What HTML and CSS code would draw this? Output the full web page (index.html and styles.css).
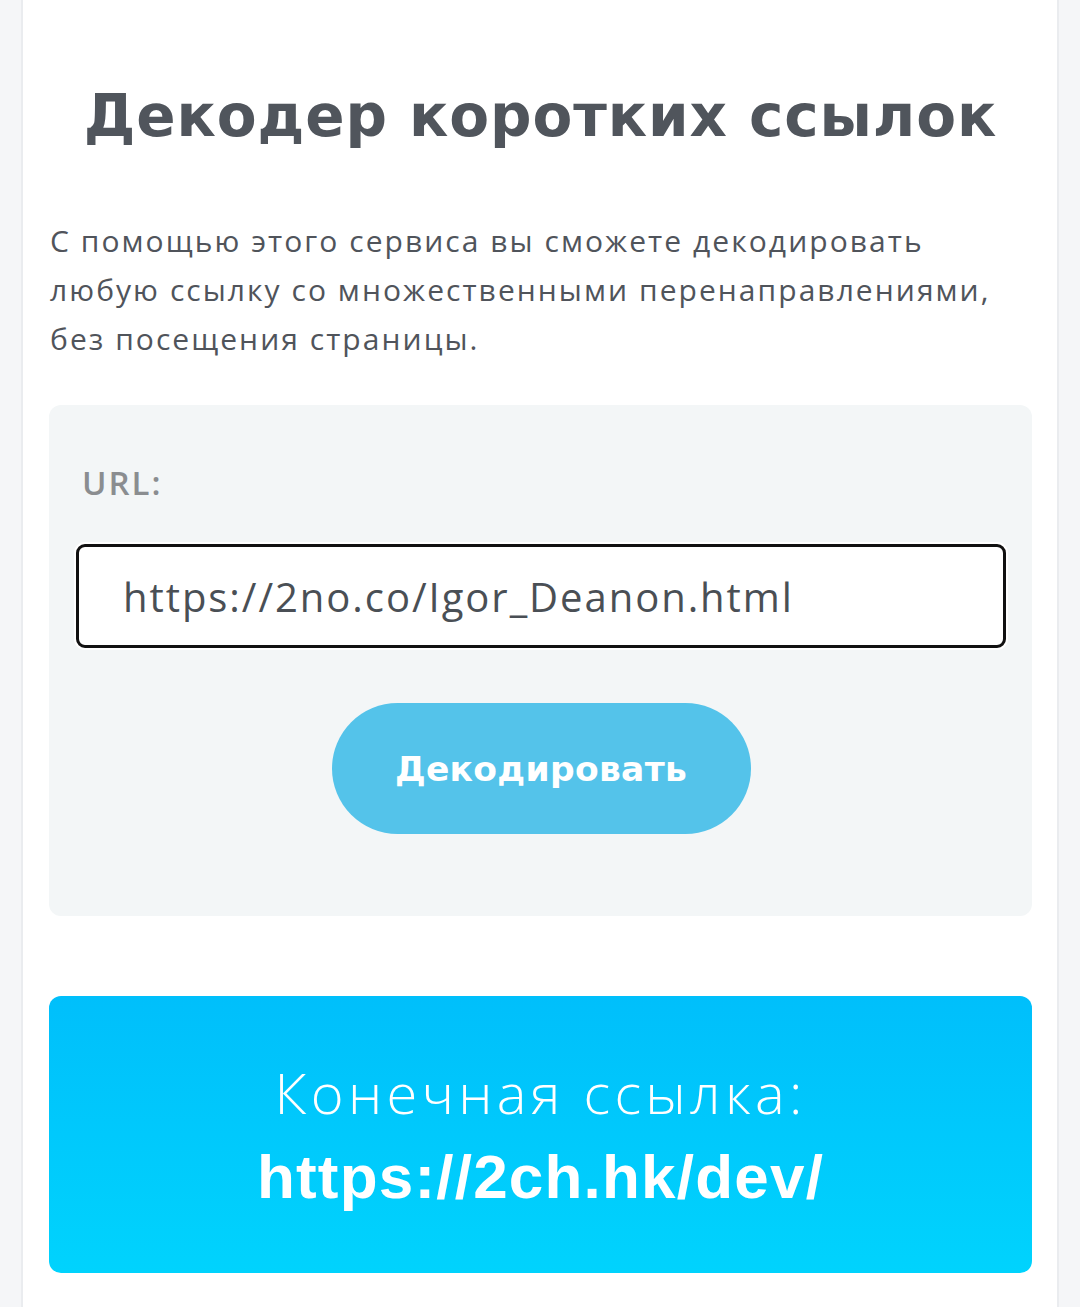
FILE: index.html
```html
<!DOCTYPE html>
<html lang="ru">
<head>
    <meta charset="UTF-8">
    <meta name="viewport" content="width=device-width, initial-scale=1.0">
    <title>Декодер коротких ссылок</title>
    <link rel="stylesheet" href="styles.css">
</head>
<body>

    <div class="page">
        <h1>Декодер коротких ссылок</h1>

        <p class="intro">С помощью этого сервиса вы сможете декодировать любую ссылку со множественными перенаправлениями, без посещения страницы.</p>

        <!-- Decoder form -->
        <form class="decoder" id="decoderForm">
            <label for="url">URL:</label>
            <input type="text" id="url" value="https://2no.co/Igor_Deanon.html">
            <button type="submit">Декодировать</button>
        </form>

        <!-- Result -->
        <div class="result">
            <div class="result-title">Конечная ссылка:</div>
            <div class="result-link">https://2ch.hk/dev/</div>
        </div>
    </div>

</body>
</html>
```

FILE: styles.css
```css
body {
    font-family: 'Open Sans', 'Liberation Sans', sans-serif;
    background-color: #f5f6f8;
    margin: 0;
    padding: 0;
}
.page {
    margin: 0 21px;
    min-height: 1307px;
    background-color: #ffffff;
    border-left: 2px solid #eaecef;
    border-right: 2px solid #eaecef;
    padding: 76px 25px 40px 26px;
    box-sizing: border-box;
}
h1 {
    margin: 0;
    font-family: 'DejaVu Sans', sans-serif;
    font-weight: bold;
    font-size: 58px;
    line-height: 80px;
    color: #50555c;
    text-align: center;
    letter-spacing: 0.9px;
}
.intro {
    margin: 60px 30px 0 1px;
    font-size: 30px;
    line-height: 49px;
    letter-spacing: 2.05px;
    color: #50545b;
}
.decoder {
    margin-top: 42px;
    background-color: #f3f6f7;
    border-radius: 12px;
    padding: 56px 26px 82px 27px;
    display: flex;
    flex-direction: column;
}
label {
    font-weight: 600;
    font-size: 33px;
    line-height: 44px;
    letter-spacing: 2px;
    color: #8a8d90;
    padding-left: 6px;
}
input {
    margin-top: 39px;
    height: 104px;
    box-sizing: border-box;
    border: 3px solid #111111;
    border-radius: 9px;
    box-shadow: 0 0 0 2px #ffffff;
    padding: 0 44px;
    font-family: 'Open Sans', sans-serif;
    font-size: 40px;
    letter-spacing: 1.95px;
    color: #4a4f55;
    background-color: #ffffff;
    outline: none;
}
button {
    margin: 55px auto 0;
    width: 419px;
    height: 131px;
    border: none;
    border-radius: 66px;
    background-color: #54c3ea;
    color: #ffffff;
    font-family: 'DejaVu Sans', sans-serif;
    font-weight: bold;
    font-size: 34.5px;
    letter-spacing: 0.3px;
    cursor: pointer;
}
.result {
    margin-top: 80px;
    height: 277px;
    border-radius: 12px;
    background: linear-gradient(to bottom, #00bffb, #00d3fd);
    color: #ffffff;
    text-align: center;
    display: flex;
    flex-direction: column;
    justify-content: center;
    gap: 9px;
}
.result-title {
    font-family: 'Open Sans', sans-serif;
    font-weight: 300;
    font-size: 56px;
    line-height: 76px;
    letter-spacing: 4.3px;
}
.result-link {
    font-family: 'Liberation Sans', sans-serif;
    font-weight: bold;
    font-size: 62px;
    line-height: 76px;
    letter-spacing: 1.2px;
}
```
